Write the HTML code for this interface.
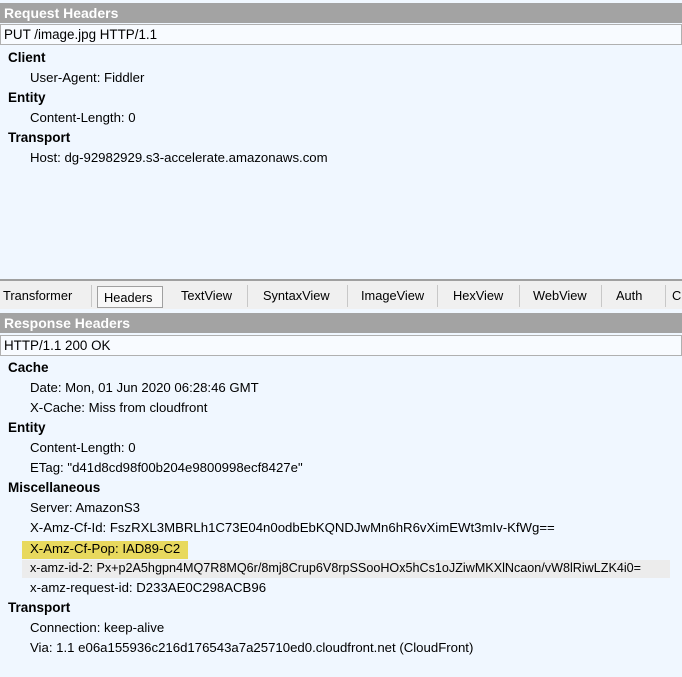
<!DOCTYPE html>
<html><head><style>
*{margin:0;padding:0;box-sizing:border-box}
body{width:682px;height:677px;overflow:hidden;background:#f0f7ff;font-family:"Liberation Sans",sans-serif;font-size:13.2px;color:#000;position:relative}
.bar{position:absolute;left:0;width:682px;height:20px;background:#a3a3a3;color:#fff;font-weight:bold;font-size:14px;padding-left:4px;line-height:20px}
.line{position:absolute;left:0;width:682px;height:21px;background:#f8fbff;border:1px solid #b0b0b0;padding-left:3px;line-height:19px;font-size:13.4px}
.r{position:absolute;left:0;height:20px;line-height:20px;white-space:nowrap}
.h{left:8px;font-weight:bold;font-size:13.5px}
.i{left:30px}
.tabs{position:absolute;left:0;top:279px;width:682px;height:30px;background:#f0f0f0;border-top:2px solid #a0a0a0}
.tab{position:absolute;top:4px;height:22px;line-height:22px;border-right:1px solid #c8c8c8;font-size:12.8px}
</style></head><body>
<div class="bar" style="top:3px">Request Headers</div>
<div class="line" style="top:24px">PUT /image.jpg HTTP/1.1</div>
<div class="r h" style="top:48px">Client</div>
<div class="r i" style="top:68px">User-Agent: Fiddler</div>
<div class="r h" style="top:88px">Entity</div>
<div class="r i" style="top:108px">Content-Length: 0</div>
<div class="r h" style="top:128px">Transport</div>
<div class="r i" style="top:148px">Host: dg-92982929.s3-accelerate.amazonaws.com</div>

<div class="tabs">
<div class="tab" style="left:0;width:92px;padding-left:3px">Transformer</div>
<div class="tab" style="left:97px;width:66px;padding-left:6px;border:1px solid #a0a0a0;background:#f8f8f8;top:5px">Headers</div>
<div class="tab" style="left:166px;width:82px;padding-left:15px">TextView</div>
<div class="tab" style="left:248px;width:100px;padding-left:15px">SyntaxView</div>
<div class="tab" style="left:348px;width:90px;padding-left:13px">ImageView</div>
<div class="tab" style="left:438px;width:82px;padding-left:15px">HexView</div>
<div class="tab" style="left:520px;width:82px;padding-left:13px">WebView</div>
<div class="tab" style="left:602px;width:64px;padding-left:14px">Auth</div>
<div class="tab" style="left:672px;width:20px;border:none">C</div>
</div>

<div class="bar" style="top:313px">Response Headers</div>
<div class="line" style="top:335px">HTTP/1.1 200 OK</div>
<div class="r h" style="top:358px">Cache</div>
<div class="r i" style="top:378px">Date: Mon, 01 Jun 2020 06:28:46 GMT</div>
<div class="r i" style="top:398px">X-Cache: Miss from cloudfront</div>
<div class="r h" style="top:418px">Entity</div>
<div class="r i" style="top:438px">Content-Length: 0</div>
<div class="r i" style="top:458px">ETag: "d41d8cd98f00b204e9800998ecf8427e"</div>
<div class="r h" style="top:478px">Miscellaneous</div>
<div class="r i" style="top:498px">Server: AmazonS3</div>
<div class="r i" style="top:518px">X-Amz-Cf-Id: FszRXL3MBRLh1C73E04n0odbEbKQNDJwMn6hR6vXimEWt3mIv-KfWg==</div>
<div style="position:absolute;left:22px;top:541px;width:166px;height:18px;background:#e8d95e"></div>
<div class="r i" style="top:539px">X-Amz-Cf-Pop: IAD89-C2</div>
<div style="position:absolute;left:22px;top:560px;width:648px;height:18px;background:#ececec"></div>
<div class="r i" style="top:558px;font-size:12.6px">x-amz-id-2: Px+p2A5hgpn4MQ7R8MQ6r/8mj8Crup6V8rpSSooHOx5hCs1oJZiwMKXlNcaon/vW8lRiwLZK4i0=</div>
<div class="r i" style="top:578px">x-amz-request-id: D233AE0C298ACB96</div>
<div class="r h" style="top:598px">Transport</div>
<div class="r i" style="top:618px">Connection: keep-alive</div>
<div class="r i" style="top:638px">Via: 1.1 e06a155936c216d176543a7a25710ed0.cloudfront.net (CloudFront)</div>
</body></html>
